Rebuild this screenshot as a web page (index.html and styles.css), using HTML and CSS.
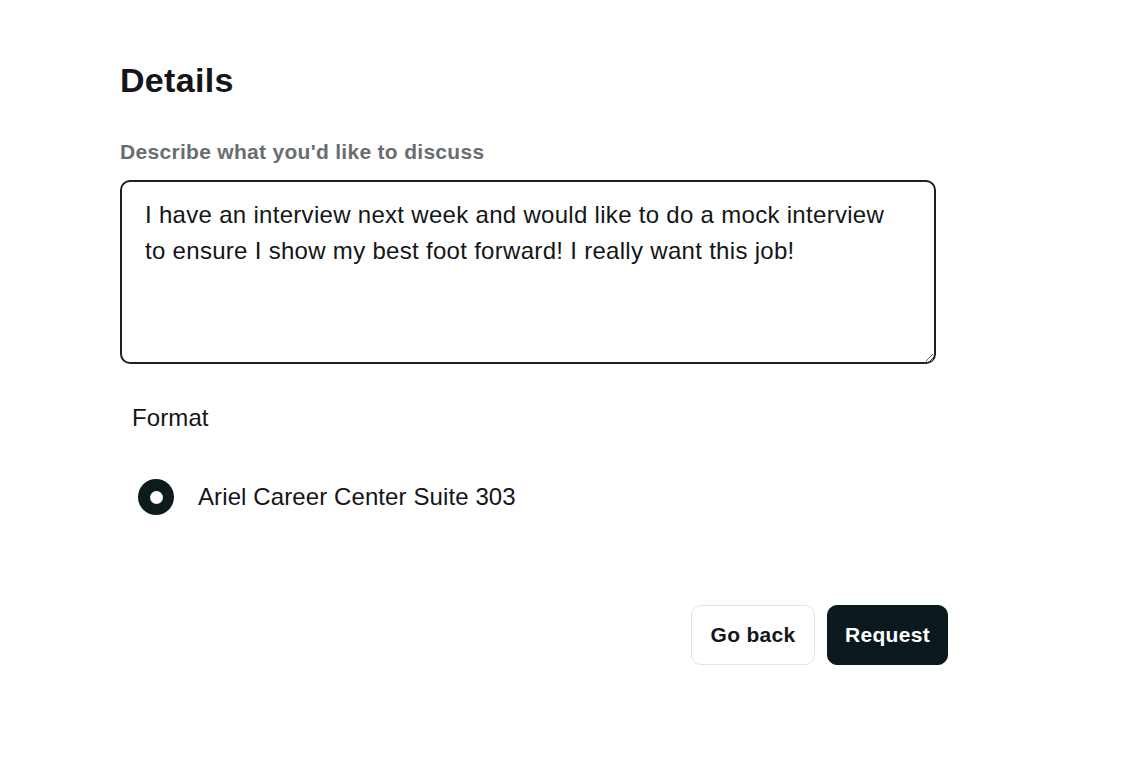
FILE: index.html
```html
<!DOCTYPE html>
<html lang="en">
<head>
<meta charset="utf-8">
<title>Details</title>
<link rel="stylesheet" href="styles.css">
</head>
<body>
<main class="page">
  <h1 class="title">Details</h1>
  <label class="field-label" for="discuss">Describe what you'd like to discuss</label>
  <textarea id="discuss" class="textbox">I have an interview next week and would like to do a mock interview to ensure I show my best foot forward! I really want this job!</textarea>
  <div class="format-label">Format</div>
  <div class="option">
    <span class="radio"><span class="radio-dot"></span></span>
    <span class="option-text">Ariel Career Center Suite 303</span>
  </div>
  <div class="actions">
    <button class="btn btn-secondary" type="button">Go back</button>
    <button class="btn btn-primary" type="button">Request</button>
  </div>
</main>
</body>
</html>
```

FILE: styles.css
```css
html, body {
  margin: 0;
  padding: 0;
  background: #ffffff;
}
body {
  font-family: "Liberation Sans", Arial, sans-serif;
  color: #111416;
}
.page {
  width: 828px;
  margin-left: 120px;
  padding-top: 60px;
  display: flex;
  flex-direction: column;
}
.title {
  margin: 0;
  font-size: 34px;
  line-height: 40px;
  font-weight: 700;
  letter-spacing: 0.3px;
  color: #131517;
}
.field-label {
  margin-top: 40px;
  font-size: 21px;
  line-height: 24px;
  font-weight: 700;
  letter-spacing: 0.3px;
  color: #6a6d6f;
}
.textbox {
  margin-top: 16px;
  width: 816px;
  height: 184px;
  box-sizing: border-box;
  border: 2px solid #142326;
  border-radius: 10px;
  padding: 15px 40px 15px 23px;
  font-family: "Liberation Sans", Arial, sans-serif;
  font-size: 24px;
  line-height: 36px;
  letter-spacing: 0.3px;
  color: #141618;
  outline: none;
}
.format-label {
  margin-top: 40px;
  margin-left: 12px;
  font-size: 24px;
  line-height: 28px;
  letter-spacing: 0.1px;
  color: #141618;
}
.option {
  margin-top: 47px;
  margin-left: 18px;
  display: flex;
  align-items: center;
  gap: 24px;
}
.radio {
  width: 36px;
  height: 36px;
  border-radius: 50%;
  background: #0d1b1e;
  display: flex;
  align-items: center;
  justify-content: center;
  flex: none;
}
.radio-dot {
  width: 13px;
  height: 13px;
  border-radius: 50%;
  background: #ffffff;
}
.option-text {
  font-size: 24px;
  line-height: 28px;
  letter-spacing: 0.1px;
  color: #141618;
}
.actions {
  margin-top: 90px;
  display: flex;
  justify-content: flex-end;
  gap: 12px;
}
.btn {
  height: 60px;
  box-sizing: border-box;
  border-radius: 10px;
  font-family: "Liberation Sans", Arial, sans-serif;
  font-size: 21px;
  font-weight: 700;
  letter-spacing: 0.3px;
  padding: 0;
  cursor: pointer;
}
.btn-secondary {
  width: 124px;
  background: #ffffff;
  border: 1px solid #e1e3e4;
  color: #141618;
}
.btn-primary {
  width: 121px;
  background: #0b191c;
  border: 1px solid #0b191c;
  color: #ffffff;
}
```
